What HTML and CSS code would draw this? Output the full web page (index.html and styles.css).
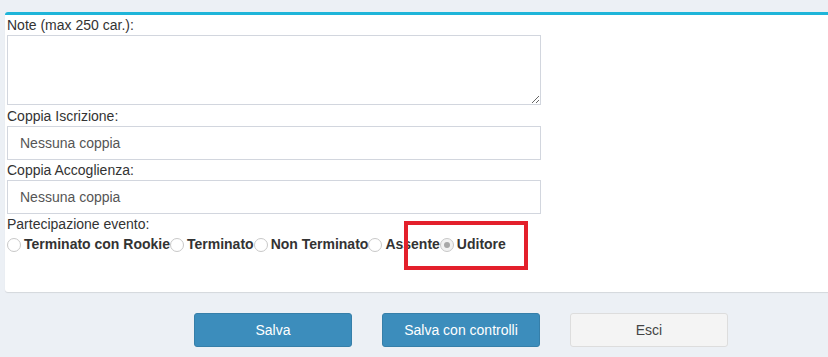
FILE: index.html
```html
<!DOCTYPE html>
<html>
<head>
    <meta charset="UTF-8">
    <title>Partecipazione</title>
    <link rel="stylesheet" href="styles.css">
</head>
<body>
    <div class="box">
        <form class="box-body">
            <label class="campo-label">Note (max 250 car.):</label>
            <textarea class="campo-note" maxlength="250"></textarea>

            <label class="campo-label">Coppia Iscrizione:</label>
            <input type="text" class="campo-input" value="Nessuna coppia" readonly>

            <label class="campo-label">Coppia Accoglienza:</label>
            <input type="text" class="campo-input" value="Nessuna coppia" readonly>

            <label class="campo-label">Partecipazione evento:</label>
            <div class="radio-riga">
                <label class="radio-voce"><input type="radio" name="esito" disabled>Terminato con Rookie</label>
                <label class="radio-voce"><input type="radio" name="esito" disabled>Terminato</label>
                <label class="radio-voce"><input type="radio" name="esito" disabled>Non Terminato</label>
                <label class="radio-voce"><input type="radio" name="esito" disabled>Assente</label>
                <label class="radio-voce"><input type="radio" name="esito" checked disabled>Uditore</label>
                <!-- riquadro di evidenziazione -->
                <span class="evidenzia"></span>
            </div>
        </form>
    </div>

    <div class="pulsanti">
        <button class="btn btn-primary">Salva</button>
        <button class="btn btn-primary">Salva con controlli</button>
        <button class="btn btn-default">Esci</button>
    </div>
</body>
</html>
```

FILE: styles.css
```css
/* Stili generali */
body {
    margin: 0;
    background: #ecf0f5;
    font-family: "Liberation Sans", Arial, sans-serif;
    font-size: 14px;
    color: #333;
    overflow: hidden;
}

.box {
    margin: 12px -100px 0 5px; /* il riquadro continua oltre il bordo destro */
    background: #fff;
    border-top: 3px solid #1fb5d9;
    border-radius: 3px;
    box-shadow: 0 1px 1px rgba(0, 0, 0, 0.1);
}

.box-body {
    display: flex;
    flex-direction: column;
    align-items: flex-start;
    padding: 0 2px 38px 2px;
}

.campo-label {
    display: block;
    line-height: 20px;
    height: 20px;
}

.campo-note {
    width: 534px;
    height: 70px;
    box-sizing: border-box;
    border: 1px solid #d2d6de;
    margin: 0 0 1px 0;
    padding: 6px 12px;
    resize: vertical;
    font-family: inherit;
}

.campo-input {
    width: 534px;
    height: 34px;
    box-sizing: border-box;
    border: 1px solid #d2d6de;
    padding: 6px 12px;
    margin: 0;
    font-family: inherit;
    font-size: 14px;
    color: #555;
    outline: none;
}

/* Riga dei radio */
.radio-riga {
    position: relative;
    display: flex;
    height: 20px;
    align-items: center;
}

.radio-voce {
    display: flex;
    align-items: center;
    font-weight: bold;
    font-size: 14px;
    color: #333;
}

.radio-voce input {
    -webkit-appearance: none;
    appearance: none;
    width: 14px;
    height: 14px;
    margin: 1px 3px 0 0;
    border: 1px solid #c8c8c8;
    border-radius: 50%;
    background: #fff;
    box-sizing: border-box;
    position: relative;
}

.radio-voce input:checked {
    background: #f2f2f2;
}

.radio-voce input:checked::after {
    content: "";
    position: absolute;
    left: 3px;
    top: 3px;
    width: 6px;
    height: 6px;
    border-radius: 50%;
    background: #a8a8a8;
}

.evidenzia {
    position: absolute;
    left: 397px;
    top: -13px;
    width: 116px;
    height: 41px;
    border: 4px solid #e3202b;
    pointer-events: none;
}

/* Pulsanti */
.pulsanti {
    display: flex;
    gap: 30px;
    padding: 21px 0 0 194px;
}

.btn {
    width: 158px;
    height: 34px;
    border-radius: 3px;
    font-family: inherit;
    font-size: 14px;
    cursor: pointer;
}

.btn-primary {
    background: #3c8dbc;
    border: 1px solid #367fa9;
    color: #fff;
}

.btn-default {
    background: #f4f4f4;
    border: 1px solid #ddd;
    color: #444;
}
```
